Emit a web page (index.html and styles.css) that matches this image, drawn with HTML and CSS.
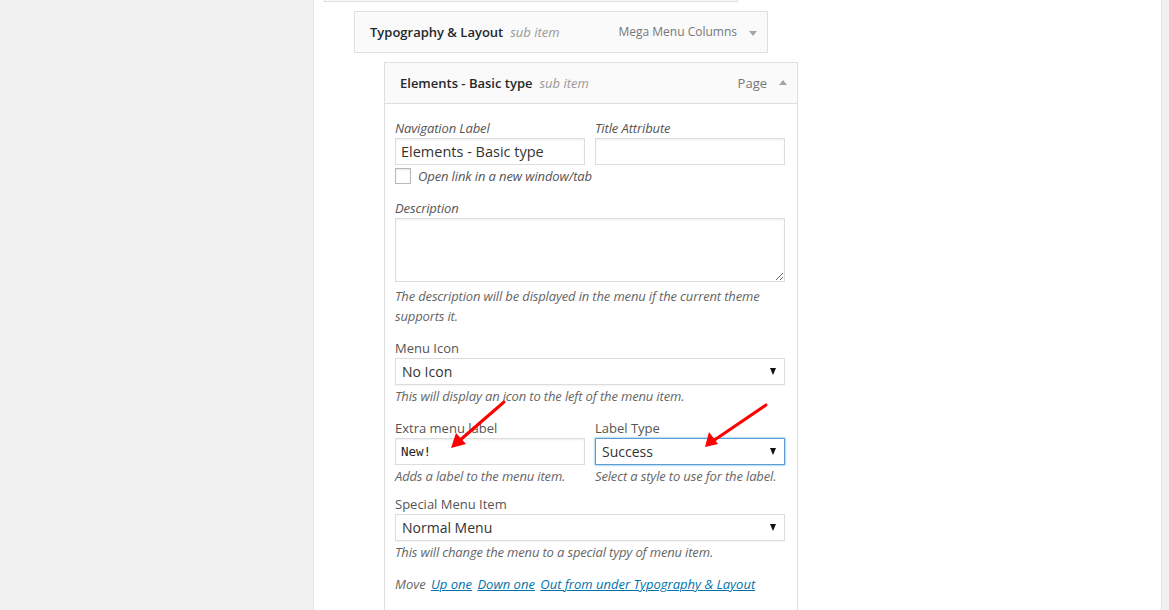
FILE: index.html
```html
<!DOCTYPE html>
<html lang="en">
<head>
    <meta charset="UTF-8">
    <title>Menus - Mega Menu</title>
    <link rel="stylesheet" href="styles.css">
</head>
<body>
    <div class="page">
        <div class="panel">
            <ul class="menu">
                <li class="item stub"></li>
                <li class="item depth-1">
                    <div class="handle">
                        <span class="title">Typography &amp; Layout</span>
                        <span class="sub">sub item</span>
                        <span class="type small">Mega Menu Columns</span>
                        <span class="toggle down"></span>
                    </div>
                </li>
                <li class="item depth-2 open">
                    <div class="handle">
                        <span class="title">Elements - Basic type</span>
                        <span class="sub">sub item</span>
                        <span class="type">Page</span>
                        <span class="toggle up"></span>
                    </div>
                    <div class="settings">
                        <div class="row">
                            <div class="field half">
                                <label class="label italic">Navigation Label</label>
                                <div class="input">Elements - Basic type</div>
                            </div>
                            <div class="field half">
                                <label class="label italic">Title Attribute</label>
                                <div class="input"></div>
                            </div>
                        </div>
                        <div class="check-row">
                            <span class="checkbox"></span>
                            <span class="italic">Open link in a new window/tab</span>
                        </div>
                        <div class="field">
                            <label class="label italic">Description</label>
                            <textarea class="textarea" rows="3"></textarea>
                            <p class="help">The description will be displayed in the menu if the current theme supports it.</p>
                        </div>
                        <div class="field">
                            <label class="label">Menu Icon</label>
                            <div class="select">No Icon <span class="caret"></span></div>
                            <p class="help">This will display an icon to the left of the menu item.</p>
                        </div>
                        <div class="row">
                            <div class="field half">
                                <label class="label">Extra menu label</label>
                                <div class="input mono">New!</div>
                                <p class="help">Adds a label to the menu item.</p>
                            </div>
                            <div class="field half">
                                <label class="label">Label Type</label>
                                <div class="select focus">Success <span class="caret"></span></div>
                                <p class="help">Select a style to use for the label.</p>
                            </div>
                        </div>
                        <div class="field special">
                            <label class="label">Special Menu Item</label>
                            <div class="select">Normal Menu <span class="caret"></span></div>
                            <p class="help">This will change the menu to a special typy of menu item.</p>
                        </div>
                        <div class="move">
                            Move <a href="#">Up one</a> <a href="#">Down one</a> <a href="#">Out from under Typography &amp; Layout</a>
                        </div>
                    </div>
                </li>
            </ul>
        </div>
    </div>

    <!-- red arrows drawn over the screenshot -->
    <svg class="arrows" width="1169" height="610" viewBox="0 0 1169 610">
        <g stroke="#f00" stroke-width="3" stroke-linecap="round" fill="#f00">
            <line x1="504" y1="402" x2="459" y2="441"/>
            <line x1="766" y1="405" x2="713" y2="441"/>
        </g>
        <g fill="#f00">
            <polygon points="451,448 456,433 466,444"/>
            <polygon points="705,447 709,432 718,444"/>
        </g>
    </svg>
</body>
</html>
```

FILE: styles.css
```css
* {
    box-sizing: border-box;
}
body {
    margin: 0;
    background: #f1f1f1;
    font-family: "Open Sans", "Liberation Sans", sans-serif;
    font-size: 13px;
    color: #444;
    overflow: hidden;
}
.page {
    height: 610px;
    padding-left: 313px;
}
.panel {
    width: 849px;
    height: 610px;
    background: #fff;
    border-left: 1px solid #e5e5e5;
    border-right: 1px solid #e5e5e5;
}
.menu {
    list-style: none;
    margin: 0;
    padding: 0 0 0 10px;
}
.item {
    width: 414px;
    margin-top: 9px;
}
.item.stub {
    margin-top: 0;
    height: 2px;
    background: #f9f9f9;
    border: 1px solid #dfdfdf;
    border-top: none;
}
.depth-1 { margin-left: 30px; }
.depth-2 { margin-left: 60px; }

.handle {
    display: flex;
    align-items: center;
    height: 42px;
    padding: 0 10px 0 15px;
    background: #fafafa;
    border: 1px solid #dfdfdf;
    line-height: 40px;
}
.title {
    font-weight: 600;
    color: #23282d;
}
.sub {
    margin-left: 7px;
    font-style: italic;
    color: #999;
}
.type {
    margin-left: auto;
    color: #777;
}
.type.small {
    font-size: 12px;
}
.toggle {
    width: 0;
    height: 0;
    margin-left: 12px;
    border-left: 4px solid transparent;
    border-right: 4px solid transparent;
}
.toggle.down { border-top: 5px solid #a0a5aa; margin-top: 2px; }
.toggle.up { border-bottom: 5px solid #a0a5aa; margin-top: -2px; }

.settings {
    height: 520px;
    padding: 14px 12px 10px 10px;
    border: 1px solid #dfdfdf;
    border-top: none;
}
.row {
    display: flex;
    gap: 10px;
}
.field {
    margin-top: 12px;
}
.row .field, .row:first-child .field {
    margin-top: 0;
}
.row + .row, .field + .row {
    margin-top: 12px;
}
.field.half {
    width: 190px;
}
.field.special {
    margin-top: 8px;
}
.label {
    display: block;
    line-height: 20px;
    color: #555;
}
.italic {
    font-style: italic;
    letter-spacing: -0.12px;
}
.input, .select {
    height: 27px;
    border: 1px solid #ddd;
    box-shadow: inset 0 1px 2px rgba(0, 0, 0, 0.07);
    background: #fff;
    font-size: 14.5px;
    color: #333;
    line-height: 25px;
    padding: 0 5px;
}
.input.mono {
    font-family: "DejaVu Sans Mono", monospace;
    font-size: 12.5px;
    color: #222;
}
.select {
    display: flex;
    align-items: center;
    padding: 0 6px;
    box-shadow: 0 1px 1px rgba(0, 0, 0, 0.04);
    font-size: 14px;
}
.select.focus {
    border-color: #5b9dd9;
    box-shadow: 0 0 2px rgba(30, 140, 190, 0.8);
}
.caret {
    width: 0;
    height: 0;
    margin-left: auto;
    margin-right: 2px;
    border-left: 3.5px solid transparent;
    border-right: 3.5px solid transparent;
    border-top: 7px solid #111;
}
.check-row {
    display: flex;
    align-items: center;
    gap: 7px;
    margin-top: 1px;
    line-height: 20px;
    color: #555;
}
.checkbox {
    width: 16px;
    height: 16px;
    border: 1px solid #b4b9be;
    box-shadow: inset 0 1px 2px rgba(0, 0, 0, 0.1);
    background: #fff;
}
.textarea {
    display: block;
    width: 100%;
    height: 64px;
    margin: 0;
    border: 1px solid #ddd;
    box-shadow: inset 0 1px 2px rgba(0, 0, 0, 0.07);
    font-family: inherit;
    resize: both;
}
.help {
    margin: 4px 0 0;
    font-style: italic;
    letter-spacing: -0.15px;
    color: #666;
    line-height: 20px;
}
.select + .help, .input + .help {
    margin-top: 1px;
}
.move {
    margin-top: 12px;
    font-style: italic;
    color: #666;
    line-height: 20px;
}
.move a {
    margin-left: 2px;
    color: #0073aa;
}
.arrows {
    position: absolute;
    top: 0;
    left: 0;
    pointer-events: none;
}
```
